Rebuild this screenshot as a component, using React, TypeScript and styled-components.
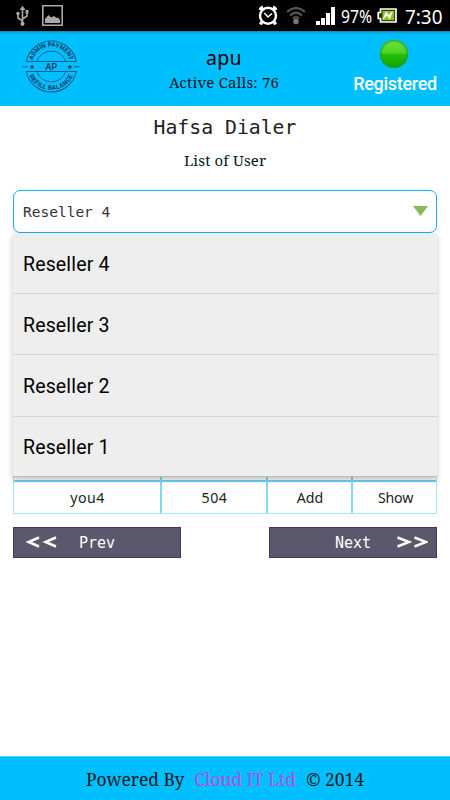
import React from "react";
import styled, { createGlobalStyle } from "styled-components";

const mono = `"DejaVu Sans Mono", "Liberation Mono", monospace`;
const sans = `"Noto Sans", "Open Sans", sans-serif`;
const serif = `"Noto Serif", "DejaVu Serif Condensed", "DejaVu Serif", serif`;

const GlobalStyle = createGlobalStyle`
  * { box-sizing: border-box; }
  body { margin: 0; background: #fff; font-family: Roboto, sans-serif; color: #000; }
`;

const Screen = styled.div`
  width: 450px;
  height: 800px;
  display: flex;
  flex-direction: column;
  overflow: hidden;
  background: #fff;
`;

const StatusBar = styled.div`
  height: 31px;
  flex: none;
  display: flex;
  align-items: center;
  background: #000;
  color: #fff;
  padding: 0 8px 0 14px;
  font-family: ${sans};
`;

const StatusIcons = styled.div<{ $push?: boolean }>`
  display: flex;
  align-items: center;
  margin-left: ${(p) => (p.$push ? "auto" : "0")};
  svg { display: block; }
`;

const Percent = styled.span`
  width: 31px;
  margin: 1px 5px 0 5px;
  font-size: 17.5px;
  line-height: 28px;
  white-space: nowrap;
  span { display: inline-block; transform: scaleX(0.9); transform-origin: left; }
`;

const Clock = styled.span`
  width: 37px;
  margin: 0 0 0 8px;
  font-size: 20.5px;
  line-height: 28px;
  white-space: nowrap;
  span { display: inline-block; transform: scaleX(0.92); transform-origin: left; }
`;

const Header = styled.header`
  height: 75px;
  flex: none;
  display: grid;
  grid-template-columns: 102px 1fr 102px;
  background: linear-gradient(#1187ae 0, #03b2ec 2px, #00bfff 4px);
  padding-right: 4px;
`;

const LogoBox = styled.div`
  padding: 8px 0 0 20px;
  svg { display: block; }
`;

const Account = styled.div`
  display: flex;
  flex-direction: column;
  align-items: center;
  padding: 14px 0 0 2px;
`;

const Label = styled.span<{ $size: number; $line: number; $space?: number; $mono?: boolean }>`
  display: block;
  font-family: ${(p) => (p.$mono ? mono : sans)};
  font-size: ${(p) => p.$size}px;
  line-height: ${(p) => p.$line}px;
  letter-spacing: ${(p) => p.$space ?? 0}px;
  white-space: pre;
`;

const Serif = styled.div<{ $size: number; $line: number; $space?: number }>`
  font-family: ${serif};
  font-size: ${(p) => p.$size}px;
  line-height: ${(p) => p.$line}px;
  letter-spacing: ${(p) => p.$space ?? 0}px;
  color: #071920;
  white-space: pre;
`;

const Registration = styled.div`
  display: flex;
  flex-direction: column;
  align-items: center;
  padding: 9px 0 0;
  color: #fff;
  font: 500 18px/24px Roboto, sans-serif;
`;

const Led = styled.span`
  width: 28px;
  height: 28px;
  margin: 0 2px 4px 0;
  border-radius: 50%;
  background: linear-gradient(#70e33c 0%, #4fd323 46%, #28bd0b 52%, #08a500 100%);
  box-shadow: inset 0 0 2px 1px #279b1c;
`;

const Registered = styled.span`
  letter-spacing: -0.3px;
`;

const Main = styled.main`
  flex: 1;
  display: flex;
  flex-direction: column;
  padding: 8px 13px 0;
`;

const Title = styled.h1`
  margin: 0 0 8px;
  font-weight: 400;
  text-align: center;
  color: #222;
`;

const Subtitle = styled.div`
  display: flex;
  justify-content: center;
  height: 22px;
  margin-bottom: 19px;
`;

const SelectWrap = styled.div`
  position: relative;
  height: 43px;
`;

const SelectBox = styled.div`
  height: 43px;
  display: flex;
  align-items: center;
  justify-content: space-between;
  padding: 0 8px 0 9px;
  border: 1px solid #16aef3;
  border-radius: 7px;
  color: #333;
  svg { margin-bottom: 2px; }
`;

const Menu = styled.ul`
  position: absolute;
  z-index: 1;
  top: 43px;
  left: 0;
  right: 0;
  margin: 0;
  padding: 0;
  list-style: none;
  background: #eee;
  border-bottom: 1px solid #bbb;
  box-shadow: 0 3px 6px rgba(0, 0, 0, 0.24);
`;

const Option = styled.li`
  height: 61.2px;
  display: flex;
  align-items: center;
  padding: 3px 10px 0;
  font: 19.5px/24px Roboto, sans-serif;
  letter-spacing: 0.15px;
  border-bottom: 1px solid #d4d4d4;
  &:last-child { border-bottom: 0; height: 59px; padding-top: 4px; }
`;

const Row = styled.div`
  height: 44px;
  margin: 237px 0 13px;
  display: grid;
  grid-template-columns: 148px 106px 85px 1fr;
  border: 1px solid #a5e5fc;
  border-top: 0;
  background: linear-gradient(#6fd3f8, #6fd3f8) 0 10px / 100% 2px no-repeat;
`;

const Cell = styled.div`
  display: flex;
  justify-content: center;
  padding: 12px 0 0 1px;
  color: #222;
  border-right: 2px solid #80daf8;
  &:last-child { border-right: 0; padding-left: 2px; }
`;

const Pager = styled.div`
  display: flex;
  justify-content: space-between;
`;

const PageButton = styled.button`
  width: 168px;
  height: 31px;
  display: flex;
  align-items: center;
  justify-content: space-between;
  padding: 0 65px 0 12px;
  border: 1px solid #3f3a59;
  background: #5b576d;
  color: #fff;
  svg { margin-bottom: 1px; }
  &:last-child { padding: 0 8px 0 65px; }
`;

const Footer = styled.footer`
  height: 44px;
  flex: none;
  display: flex;
  align-items: center;
  justify-content: center;
  gap: 10px;
  background: #00bfff;
  border-top: 1px solid #58cff8;
`;

const Company = styled(Serif)`
  color: #b94fdc;
`;

function UsbIcon() {
  return (
    <svg width="16" height="22" viewBox="0 0 16 22" fill="none" stroke="#aaa" strokeWidth="1.6">
      <path d="M8.5 4V20M8.5 16L4 13V9M8.5 14L13 11V7" />
      <path d="M8.5 .8L11.5 5H5.5Z" fill="#aaa" stroke="none" />
      <circle cx="8.5" cy="18.8" r="2.1" fill="#aaa" stroke="none" />
      <circle cx="4" cy="8.5" r="1.7" fill="#aaa" stroke="none" />
      <path d="M11.5 5h3v3.4h-3z" fill="#aaa" stroke="none" />
    </svg>
  );
}

function PictureIcon() {
  return (
    <svg width="21" height="21" viewBox="0 0 21 21">
      <path d="M.8 .8H20.2V20.2H.8Z" fill="none" stroke="#aaa" strokeWidth="1.6" />
      <path d="M3 18V14L6.5 10 9 12.5 12 11 14.5 13 16 12.5 18 15V18Z" fill="#aaa" />
    </svg>
  );
}

function AlarmIcon() {
  return (
    <svg width="20" height="21" viewBox="0 0 20 21" fill="none" stroke="#fff">
      <circle cx="10" cy="10.8" r="8" strokeWidth="2.4" />
      <path d="M6.3 8L10 12L14 8.5" strokeWidth="1.5" />
      <path d="M1.9 5A6 6 0 0 1 5 2M18.1 5A6 6 0 0 0 15 2M4 16.5L2.4 19.6M16 16.5L17.6 19.6" strokeWidth="3.2" />
    </svg>
  );
}

function WifiIcon() {
  return (
    <svg width="20" height="19" viewBox="0 0 20 19" fill="none" stroke="#565656" strokeWidth="2">
      <path d="M1 6Q10-2 19 6M4 9.5Q10 3.8 16 9.5M6.8 12.5Q10 9.4 13.2 12.5" />
      <circle cx="10" cy="15.4" r="2.8" fill="#777" stroke="none" />
    </svg>
  );
}

function SignalIcon() {
  return (
    <svg width="20" height="18" viewBox="0 0 20 18" fill="#fff">
      <path d="M0 14h4v4H0zM5 11h4v7H5zM10 6h4v12h-4zM15 0h4v18h-4z" />
    </svg>
  );
}

function BatteryIcon() {
  return (
    <svg width="20" height="15" viewBox="0 0 20 15">
      <path d="M3.5 1H19V14H3.5V10.5H1.2V4.5H3.5Z" fill="#28380c" stroke="#fff" strokeWidth="1.7" />
      <path d="M5.5 3H17.2V12.2H5.5Z" fill="#8cc31c" />
      <path d="M5.2 12.3L9 3.2L11.7 6.9L16 2.8L12.9 11.3L9.9 7.7Z" fill="#fff" />
    </svg>
  );
}

function StampLogo() {
  return (
    <svg width="62" height="54" viewBox="0 0 62 54" fill="none" stroke="#175e91">
      <defs>
        <path id="stampTop" d="M11.8 27A19.4 19.4 0 0 1 50.6 27" />
        <path id="stampBottom" d="M7.2 27A24 24 0 0 0 55.2 27" />
      </defs>
      <path d="M6.3 22.5A25.5 25.5 0 0 1 56.3 22.5ZM6.3 32.5A25.5 25.5 0 0 0 56.3 32.5Z" strokeWidth="1.1" />
      <path d="M16.8 22.5A15.3 15.3 0 0 1 45.8 22.5M16.8 32.5A15.3 15.3 0 0 0 45.8 32.5" strokeWidth="1" />
      <path d="M2 27.8H8M53.5 27.8H59.5" strokeWidth="1" />
      <g fill="#12365c" stroke="none" fontFamily="Roboto, sans-serif">
        <path d="M12 25.5l.7 1.5 1.6.2-1.1 1.1.3 1.6-1.5-.8-1.5.8.3-1.6-1.1-1.1 1.6-.2zM49.8 25.5l.7 1.5 1.6.2-1.1 1.1.3 1.6-1.5-.8-1.5.8.3-1.6-1.1-1.1 1.6-.2z" />
        <text x="31.2" y="31" textAnchor="middle" fontSize="9.2" fontWeight="500">AP</text>
        <text fontSize="6.1" fontWeight="700" textAnchor="middle">
          <textPath href="#stampTop" startOffset="50%">ADMIN PAYMENT</textPath>
        </text>
        <text fontSize="6.3" fontWeight="700" textAnchor="middle" letterSpacing="0.4">
          <textPath href="#stampBottom" startOffset="50%">REFILL BALANCE</textPath>
        </text>
      </g>
    </svg>
  );
}

function DownTriangle() {
  return (
    <svg width="15" height="10" viewBox="0 0 15 10">
      <path d="M0 0H15L7.5 10Z" fill="#82bc5d" />
    </svg>
  );
}

function Chevrons({ forward = false }: { forward?: boolean }) {
  return (
    <svg width="31" height="12" viewBox="0 0 31 12" fill="none" stroke="#fff" strokeWidth="2.5">
      {forward ? (
        <path d="M.5 1.5L12 6L.5 10.5M17.5 1.5L29 6L17.5 10.5" />
      ) : (
        <path d="M13 1.5L2.5 6L13 10.5M30 1.5L19.5 6L30 10.5" />
      )}
    </svg>
  );
}

const Spacer = styled.span<{ $w: number }>`
  width: ${(p) => p.$w}px;
`;

const resellers = ["Reseller 4", "Reseller 3", "Reseller 2", "Reseller 1"];
const userRow = [
  { value: "you4", space: 0.4 },
  { value: "504", space: 0.6 },
  { value: "Add", space: 0 },
  { value: "Show", space: -0.2 },
];

export default function App() {
  return (
    <Screen>
      <GlobalStyle />
      <StatusBar>
        <StatusIcons>
          <UsbIcon />
          <Spacer $w={12} />
          <PictureIcon />
        </StatusIcons>
        <StatusIcons $push>
          <AlarmIcon />
          <Spacer $w={8} />
          <WifiIcon />
          <Spacer $w={10} />
          <SignalIcon />
          <Percent><span>97%</span></Percent>
          <BatteryIcon />
          <Clock><span>7:30</span></Clock>
        </StatusIcons>
      </StatusBar>
      <Header>
        <LogoBox><StampLogo /></LogoBox>
        <Account>
          <Label $size={19.5} $line={26} $space={0.3}>apu</Label>
          <Serif $size={15} $line={22} $space={0.2}>Active Calls: 76</Serif>
        </Account>
        <Registration>
          <Led />
          <Registered>Registered</Registered>
        </Registration>
      </Header>
      <Main>
        <Title><Label $mono $size={19.8} $line={27}>Hafsa Dialer</Label></Title>
        <Subtitle><Serif $size={15} $line={22} $space={0.12}>List of User</Serif></Subtitle>
        <SelectWrap>
          <SelectBox>
            <Label $mono $size={14.5} $line={20}>Reseller 4</Label>
            <DownTriangle />
          </SelectBox>
          <Menu>
            {resellers.map((name) => <Option key={name}>{name}</Option>)}
          </Menu>
        </SelectWrap>
        <Row>
          {userRow.map(({ value, space }) => (
            <Cell key={value}><Label $size={14.2} $line={31} $space={space}>{value}</Label></Cell>
          ))}
        </Row>
        <Pager>
          <PageButton><Chevrons /><Label $mono $size={15} $line={20}>Prev</Label></PageButton>
          <PageButton><Label $mono $size={15} $line={20}>Next</Label><Chevrons forward /></PageButton>
        </Pager>
      </Main>
      <Footer>
        <Serif $size={17.4} $line={24}>Powered By</Serif>
        <Company $size={17.4} $line={24}>Cloud IT Ltd</Company>
        <Serif $size={17.4} $line={24}>© 2014</Serif>
      </Footer>
    </Screen>
  );
}
